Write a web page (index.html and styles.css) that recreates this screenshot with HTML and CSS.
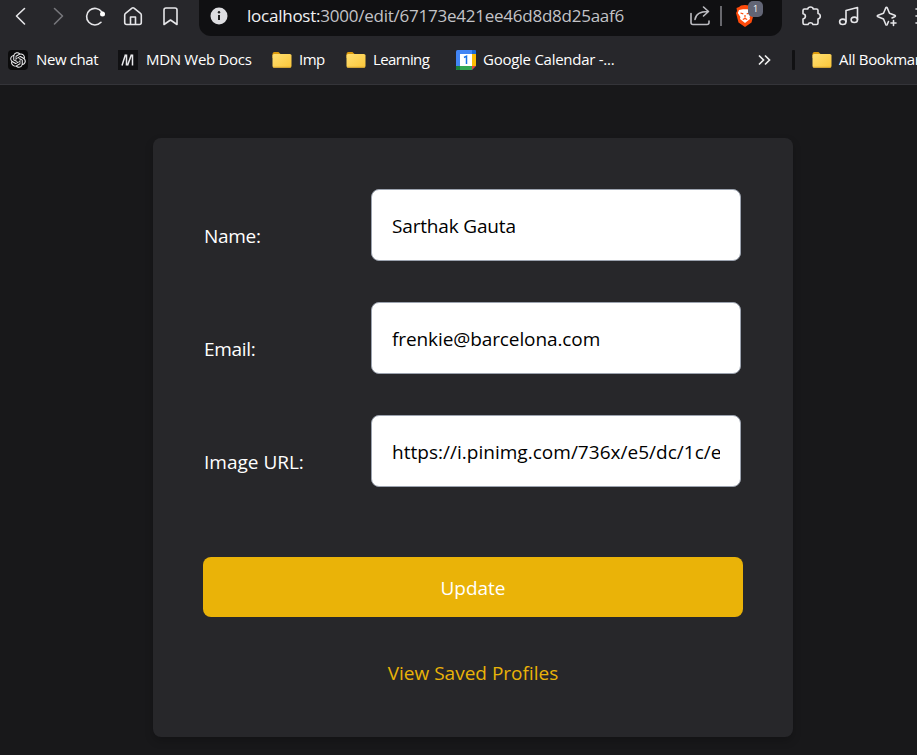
FILE: index.html
```
<!DOCTYPE html>
<html lang="en">
<head>
<meta charset="utf-8">
<title>Edit profile</title>
<link rel="stylesheet" href="styles.css">
</head>
<body>
<svg class="defs" width="0" height="0" aria-hidden="true">
  <defs>
    <linearGradient id="folder-fill" x1="0" y1="0" x2="1" y2="1">
      <stop offset="0" stop-color="#ffdf72"/><stop offset="1" stop-color="#fac63a"/>
    </linearGradient>
    <symbol id="folder" viewBox="0 0 20 20">
      <path d="M.5 4q0-2 2-2h4l2 2H17v4H.5z" fill="#dc9a0c"/>
      <rect x=".5" y="4" width="19" height="13.7" rx="1.6" fill="url(#folder-fill)"/>
      <path d="M1 17.2h18" stroke="#d9a52c" stroke-width=".8"/>
    </symbol>
  </defs>
</svg>
<header class="chrome">
  <div class="toolbar">
    <nav class="nav">
      <svg viewBox="0 0 24 24"><path d="M16.500 4.500 8.500 12l8 8"/></svg>
      <svg class="off" viewBox="0 0 24 24"><path d="m8.500 4.500 8 7.500-8 8"/></svg>
      <svg viewBox="0 0 24 24"><path d="M18 18.300A8.300 8.300 0 1 1 18.800 8"/><circle cx="19.500" cy="10" r="2.500" class="solid"/></svg>
      <svg viewBox="0 0 24 24"><path d="M3.700 11v7.500q0 2 2 2h12.600q2 0 2-2V11q0-1-.8-1.600L13 4.200q-1-.8-2 0L4.500 9.400q-.8.600-.8 1.600zM9.500 20v-7h5v7"/></svg>
      <svg viewBox="0 0 24 24"><path d="M6 20V6q0-2 2-2h9q2 0 2 2v14.500l-6.500-4.500L6 20.500z"/></svg>
    </nav>
    <div class="address">
      <svg class="info" viewBox="0 0 18 18"><circle cx="9" cy="9" r="8.500" fill="#dedee1"/><path d="M9 8v5" stroke="#222" stroke-width="2"/><circle cx="9" cy="5.200" r="1.200" fill="#222"/></svg>
      <span class="url">localhost:<span>3000/edit/67173e421ee46d8d8d25aaf6</span></span>
      <svg class="share" viewBox="0 0 24 24"><path d="M3 9.500v9q0 2 2 2h14q2 0 2-2V17M7 15.500q1-8 13-8M15.500 3l5 4.500-5 4.500"/></svg>
      <i class="rule"></i>
      <span class="shield">
        <svg viewBox="0 0 20 24"><path d="m10 1 4 .5 2 1.500 2.500 1-.5 3 1 2-2.500 9.500L10 23l-6.500-4.500L1 9l1-2-.5-3L4 3l2-1.500z" fill="#ff4b0b"/><path d="m4 6 4-.7h4l4 .7 1.200 3-2.600 4 .4 2-5 4-5-4 .4-2L2.800 9z" fill="#fff"/><path d="m5.500 9 2.800.8M14.500 9l-2.800.8M10 11v2.500M7.800 15.500l2.200-1 2.200 1" fill="none" stroke="#ff4b0b" stroke-width="1.200"/></svg>
        <b>1</b>
      </span>
    </div>
    <div class="tools">
      <svg viewBox="0 0 24 24"><path d="M5.500 5h3.200q.4-2 2.800-2t2.800 2h3.200q1.500 0 1.500 1.500v3q2.300.4 2.300 2.700T19 15v4q0 1.500-1.500 1.500H14q-.6-1.700-2.500-1.700T9 20.500H5.500Q4 20.500 4 19v-4q2.400-.5 2.400-2.700T4 9.700V6.500Q4 5 5.500 5z"/></svg>
      <svg viewBox="0 0 24 24"><path d="M9 17.500V6.500l11.500-3v12"/><ellipse cx="5.800" cy="17.800" rx="3.200" ry="2.700"/><ellipse cx="17.300" cy="15.800" rx="3.200" ry="2.700"/></svg>
      <svg viewBox="0 0 24 24"><path d="M13.500 17.500 12.300 20.300q-.8 1.500-1.600 0L8.500 15 3 12.700q-1.500-.7 0-1.500l5.500-2L10.700 4q.8-1.500 1.600 0l2.200 5.200 5.200 2q1.500.8 0 1.500L17 14M18.500 16.500v5M16 19h5"/></svg>
      <svg viewBox="0 0 24 24"><path d="M3 5h18M3 12h18M3 19h18"/></svg>
    </div>
  </div>
  <div class="bookmarks">
    <span class="mark chat"><svg viewBox="0 0 20 20"><rect width="20" height="20" rx="4" fill="#0b0b0c"/><path transform="translate(2.200 2.200) scale(.65)" fill="#f0f0f2" d="M22.2819 9.8211a5.9847 5.9847 0 0 0-.5157-4.9108 6.0462 6.0462 0 0 0-6.5098-2.9A6.0651 6.0651 0 0 0 4.9807 4.1818a5.9847 5.9847 0 0 0-3.9977 2.9 6.0462 6.0462 0 0 0 .7427 7.0966 5.98 5.98 0 0 0 .511 4.9107 6.051 6.051 0 0 0 6.5146 2.9001A5.9847 5.9847 0 0 0 13.2599 24a6.0557 6.0557 0 0 0 5.7718-4.2058 5.9894 5.9894 0 0 0 3.9977-2.9001 6.0557 6.0557 0 0 0-.7475-7.0729zm-9.022 12.6081a4.4755 4.4755 0 0 1-2.8764-1.0408l.1419-.0804 4.7783-2.7582a.7948.7948 0 0 0 .3927-.6813v-6.7369l2.02 1.1686a.071.071 0 0 1 .038.052v5.5826a4.504 4.504 0 0 1-4.4945 4.4944zm-9.6607-4.1254a4.4708 4.4708 0 0 1-.5346-3.0137l.142.0852 4.783 2.7582a.7712.7712 0 0 0 .7806 0l5.8428-3.3685v2.3324a.0804.0804 0 0 1-.0332.0615L9.74 19.9502a4.4992 4.4992 0 0 1-6.1408-1.6464zM2.3408 7.8956a4.485 4.485 0 0 1 2.3655-1.9728V11.6a.7664.7664 0 0 0 .3879.6765l5.8144 3.3543-2.0201 1.1685a.0757.0757 0 0 1-.071 0l-4.8303-2.7865A4.504 4.504 0 0 1 2.3408 7.872zm16.5963 3.8558L13.1038 8.364 15.1192 7.2a.0757.0757 0 0 1 .071 0l4.8303 2.7913a4.4944 4.4944 0 0 1-.6765 8.1042v-5.6772a.79.79 0 0 0-.407-.667zm2.0107-3.0231l-.142-.0852-4.7735-2.7818a.7759.7759 0 0 0-.7854 0L9.409 9.2297V6.8974a.0662.0662 0 0 1 .0284-.0615l4.8303-2.7866a4.4992 4.4992 0 0 1 6.6802 4.66zM8.3065 12.863l-2.02-1.1638a.0804.0804 0 0 1-.038-.0567V6.0742a4.4992 4.4992 0 0 1 7.3757-3.4537l-.142.0805L8.704 5.459a.7948.7948 0 0 0-.3927.6813zm1.0976-2.3654l2.602-1.4998 2.6069 1.4998v2.9994l-2.5974 1.4997-2.6067-1.4997Z"/></svg><span>New chat</span></span>
    <span class="mark mdn"><svg viewBox="0 0 20 20"><rect width="20" height="20" fill="#111113"/><path d="M4 15.500 7.500 4.500M8.500 4.500v11M9.500 15.500l4-11M14.500 4.500v11" fill="none" stroke="#e8e8ea" stroke-width="1.500"/></svg><span>MDN Web Docs</span></span>
    <span class="mark imp"><svg><use href="#folder"/></svg><span>Imp</span></span>
    <span class="mark learn"><svg><use href="#folder"/></svg><span>Learning</span></span>
    <span class="mark cal"><svg viewBox="0 0 20 20"><rect width="20" height="20" rx="1.500" fill="#4285f4"/><path d="M16 4h4v12h-4z" fill="#fbbc04"/><path d="M16 0h2.500Q20 0 20 1.500V4h-4z" fill="#1967d2"/><path d="M0 16h16v4H1.500Q0 20 0 18.500z" fill="#34a853"/><path d="M0 16h4v4H1.500Q0 20 0 18.500z" fill="#188038"/><path d="M16 16h4l-4 4z" fill="#ea4335"/><path d="M20 16v4h-4z" fill="#27272b"/><path d="M4 4h12v12H4z" fill="#fff"/><path d="m8 7.500 2.500-1.300V14" fill="none" stroke="#1a73e8" stroke-width="1.500"/></svg><span>Google Calendar -...</span></span>
    <svg class="more" viewBox="0 0 14 14"><path d="m2 2.500 4.500 4.500L2 11.500M8 2.500 12.500 7 8 11.500"/></svg>
    <i class="divider"></i>
    <span class="mark all"><svg><use href="#folder"/></svg><span>All Bookmarks</span></span>
  </div>
</header>
<main class="page">
  <form class="card">
    <label class="row"><span class="name">Name:</span><input class="person" type="text" value="Sarthak Gauta"></label>
    <label class="row"><span class="name">Email:</span><input class="email" type="text" value="frenkie@barcelona.com"></label>
    <label class="row"><span class="name wide">Image URL:</span><input class="image" type="text" value="https://i.pinimg.com/736x/e5/dc/1c/e5dc1c"></label>
    <button type="button">Update</button>
    <a class="link">View Saved Profiles</a>
  </form>
</main>
</body>
</html>
```
FILE: styles.css
```
* { box-sizing: border-box; }
body {
  margin: 0;
  height: 755px;
  overflow: hidden;
  display: flex;
  flex-direction: column;
  background: #18181a;
  color: #fff;
  font-family: "Open Sans", "Noto Sans", sans-serif;
}
.defs { position: absolute; }
svg { display: block; flex: none; }
.chrome {
  height: 85px;
  flex: none;
  background: #27272b;
  border-bottom: 1px solid #343439;
  overflow: hidden;
}
.toolbar { display: flex; height: 36px; }
.nav { display: flex; width: 199px; padding: 4px 0 0 8px; gap: 13.5px; flex: none; }
.nav svg, .tools svg, .share {
  width: 24px; height: 24px;
  fill: none; stroke: #e6e6e9; stroke-width: 1.6;
  stroke-linejoin: round; stroke-linecap: round;
}
.nav .off { stroke: #77777c; }
.nav .solid { fill: #fff; stroke: none; }
.address {
  display: flex;
  width: 583px;
  flex: none;
  padding: 0 18px 4px 11px;
  align-items: center;
  border-radius: 0 0 12px 12px;
  background: #101012;
}
.info { width: 18px; height: 18px; }
.url { width: 441px; margin: -2px 0 0 19px; font-size: 17px; letter-spacing: -.24px; color: #f1f1f2; white-space: nowrap; }
.url span { color: #c3c3c7; }
.share { stroke: #bcbcc1; }
.rule { width: 2px; height: 20px; margin-left: 8px; background: #68686d; }
.shield { position: relative; margin-left: 13px; }
.shield svg { width: 20px; height: 24px; }
.shield b {
  position: absolute; left: 13px; top: -3px;
  width: 15px; height: 16px; border-radius: 5px;
  background: #626575; color: #fff;
  font-size: 9px; font-weight: 400; line-height: 16px; text-align: center;
}
.tools { display: flex; padding: 4px 0 0 17px; gap: 14px; flex: none; }
.bookmarks { display: flex; align-items: center; height: 48px; }
.mark { display: flex; align-items: center; gap: 8px; flex: none; font-size: 15px; line-height: 20px; white-space: nowrap; letter-spacing: -.3px; }
.mark span { margin-top: -2px; }
.mark svg { width: 20px; height: 20px; }
.chat { width: 110px; margin-left: 8px; letter-spacing: -.4px; }
.mdn { width: 154px; }
.imp { width: 74px; gap: 7px; letter-spacing: -.5px; }
.learn { width: 110px; gap: 7px; letter-spacing: -.6px; }
.cal { width: 301px; gap: 7px; letter-spacing: -.26px; }
.more { width: 14px; height: 14px; fill: none; stroke: #eee; stroke-width: 1.7; }
.divider { flex: none; width: 3px; height: 20px; margin: 0 17px 0 21px; border-radius: 1px; background: #111113; }
.all { gap: 7px; }
.page { flex: 1; padding: 53px 0 0 153px; }
.card {
  display: flex;
  flex-direction: column;
  align-items: center;
  width: 640px;
  height: 599px;
  padding: 51px 50px 0;
  border-radius: 8px;
  background: #27272a;
  box-shadow: 0 4px 8px rgba(0, 0, 0, .2);
  font-size: 19px;
}
.row { display: flex; width: 540px; height: 72px; margin-bottom: 41px; }
.name { width: 168px; padding: 34px 0 0 1px; line-height: 26px; letter-spacing: -.3px; }
.name.wide { letter-spacing: 0; }
input {
  width: 370px;
  height: 72px;
  padding: 2px 20px 0;
  border: 1px solid #9ca3af;
  border-radius: 8px;
  background: #fff;
  color: #000;
  font: inherit;
}
.person { letter-spacing: -.17px; }
.email { letter-spacing: -.1px; }
.image { letter-spacing: .02px; }
button {
  width: 540px;
  height: 60px;
  flex: none;
  margin-top: 29px;
  padding: 2px 0 0;
  border: 0;
  border-radius: 8px;
  background: #eab308;
  color: #fff;
  font: inherit;
}
.link { margin-top: 43px; line-height: 26px; color: #eab308; }
```
